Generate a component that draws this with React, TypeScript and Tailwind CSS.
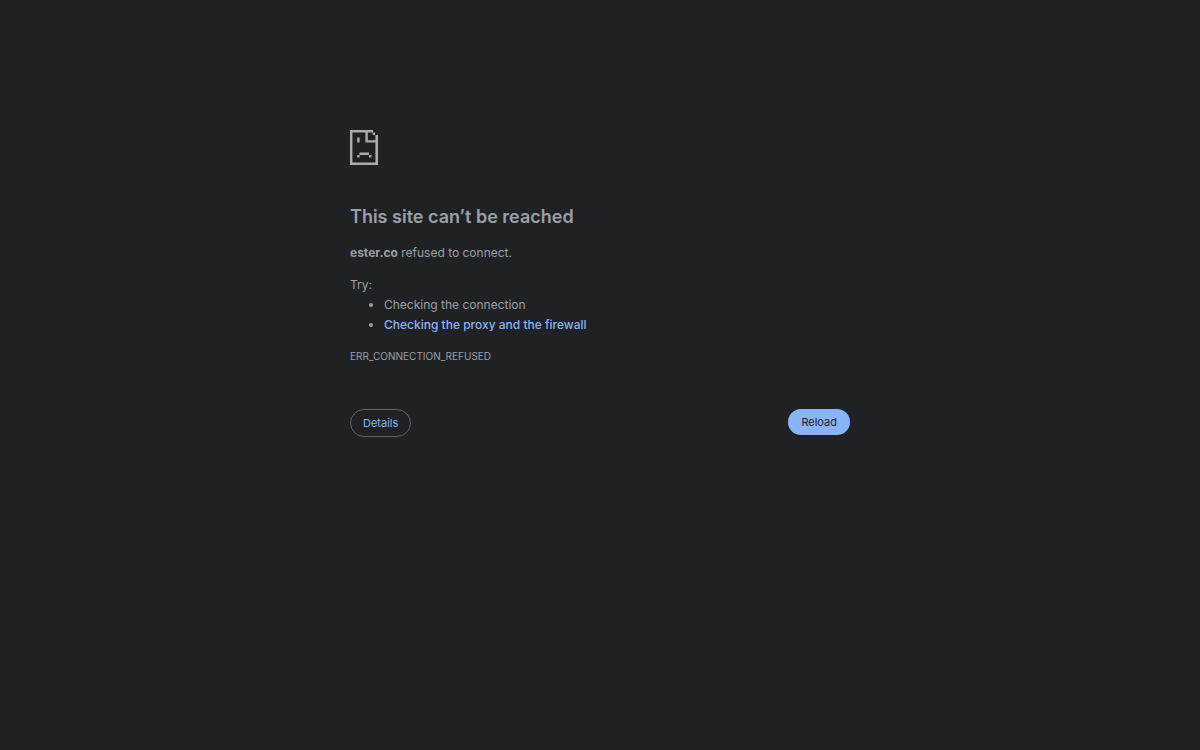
import React from 'react';

const suggestions = [
  { text: 'Checking the connection' },
  { text: 'Checking the proxy and the firewall', href: '#buttons' },
];

const SadPageIcon: React.FC = () => (
  <svg
    viewBox="0 0 28 35"
    className="h-[35px] w-7 fill-[#a9acaf]"
    aria-hidden="true"
  >
    {/* Page outline */}
    <path d="M0 0h23v2.4H2.4v30.2h23V5H28v30H0z" />
    {/* Folded corner */}
    <path d="M15.4 0h2.4v10.2h9v2.4H15.4zM22.6 2.4H25V5h-2.4z" />
    {/* Face */}
    <path d="M7.2 7.4h2.4v5.2H7.2zM9.5 22.6h9.5V25H9.5zM7.2 25h2.4v2.4H7.2zM19 25h2.4v2.4H19z" />
  </svg>
);

const App: React.FC = () => {
  return (
    <div className="min-h-screen bg-[#202124] font-['Inter','Liberation_Sans',sans-serif] text-xs leading-5 text-[#9aa0a6]">
      <main className="mx-auto w-full max-w-[500px] pt-[130px]">
        <SadPageIcon />

        <h1 className="mt-10 text-lg leading-6 font-semibold">This site can’t be reached</h1>
        <p className="mt-[14px]">
          <strong className="font-bold">ester.co</strong> refused to connect.
        </p>

        <div className="mt-3">
          <p>Try:</p>
          <ul className="list-disc pl-[34px]">
            {suggestions.map((item) => (
              <li key={item.text}>
                {item.href ? (
                  <a href={item.href} className="font-medium text-[#8ab4f8]">
                    {item.text}
                  </a>
                ) : (
                  item.text
                )}
              </li>
            ))}
          </ul>
        </div>

        <p className="mt-[11px] text-[10px] leading-5">ERR_CONNECTION_REFUSED</p>

        <div id="buttons" className="mt-[43px] flex items-start justify-between text-[11px]">
          <button type="button" className="h-7 rounded-full border border-[#5f6368] px-3 text-[#8ab4f8]">
            Details
          </button>
          <button type="button" className="h-[26px] rounded-full bg-[#8ab4f8] px-[13px] text-[#202124]">
            Reload
          </button>
        </div>
      </main>
    </div>
  );
};

export default App;
